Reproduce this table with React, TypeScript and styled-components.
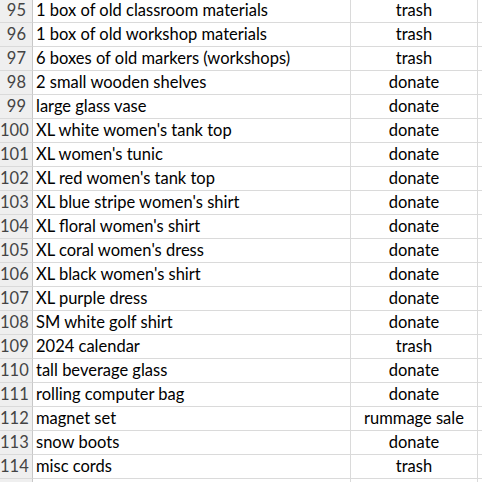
import React from "react";
import styled, { createGlobalStyle } from "styled-components";

const Global = createGlobalStyle`
  html, body { margin: 0; padding: 0; background: #ffffff; overflow: hidden; }
  body { font-family: "Lato", "Open Sans", sans-serif; }
`;

const Sheet = styled.div`
  display: grid;
  grid-template-columns: 33px 318px 127px 1fr;
  grid-auto-rows: 24px;
  margin-top: -1px;
  width: 482px;
`;

const Cell = styled.div<{ $align?: "left" | "center" | "right"; $header?: boolean }>`
  box-sizing: border-box;
  border-right: 1px solid ${(p) => (p.$header ? "#c8c8c8" : "#dadada")};
  border-bottom: 1px solid #dadada;
  background: ${(p) => (p.$header ? "#efefef" : "#ffffff")};
  color: ${(p) => (p.$header ? "#444444" : "#000000")};
  font-size: 16.5px;
  line-height: 23px;
  white-space: nowrap;
  overflow: hidden;
  text-align: ${(p) => p.$align ?? "left"};
  padding: ${(p) => (p.$header ? "0 6px 0 0" : p.$align === "center" ? "0" : "0 0 0 3px")};
`;

const Filler = styled.div`
  border-bottom: 1px solid #dadada;
  box-sizing: border-box;
`;

const rows: [string, string, string][] = [
  ["95", "1 box of old classroom materials", "trash"],
  ["96", "1 box of old workshop materials", "trash"],
  ["97", "6 boxes of old markers (workshops)", "trash"],
  ["98", "2 small wooden shelves", "donate"],
  ["99", "large glass vase", "donate"],
  ["100", "XL white women's tank top", "donate"],
  ["101", "XL women's tunic", "donate"],
  ["102", "XL red women's tank top", "donate"],
  ["103", "XL blue stripe women's shirt", "donate"],
  ["104", "XL floral women's shirt", "donate"],
  ["105", "XL coral women's dress", "donate"],
  ["106", "XL black women's shirt", "donate"],
  ["107", "XL purple dress", "donate"],
  ["108", "SM white golf shirt", "donate"],
  ["109", "2024 calendar", "trash"],
  ["110", "tall beverage glass", "donate"],
  ["111", "rolling computer bag", "donate"],
  ["112", "magnet set", "rummage sale"],
  ["113", "snow boots", "donate"],
  ["114", "misc cords", "trash"],
  ["", "", ""],
];

export default function App() {
  return (
    <>
      <Global />
      <Sheet>
        {rows.map(([n, item, action], i) => (
          <React.Fragment key={i}>
            <Cell $header $align="right">{n}</Cell>
            <Cell>{item}</Cell>
            <Cell $align="center">{action}</Cell>
            <Filler />
          </React.Fragment>
        ))}
      </Sheet>
    </>
  );
}
